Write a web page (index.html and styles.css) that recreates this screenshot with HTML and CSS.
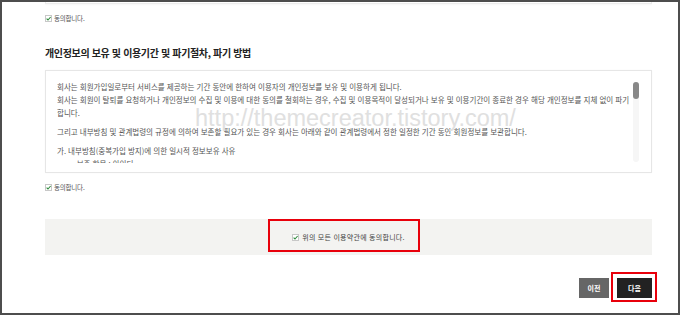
FILE: index.html
```html
<!DOCTYPE html>
<html lang="ko">
<head>
    <meta charset="UTF-8">
    <meta name="viewport" content="width=device-width, initial-scale=1.0">
    <title>약관 동의</title>
    <link rel="stylesheet" href="styles.css">
</head>
<body>
    <div class="frame">
        <div class="prev-box"></div>
        <label class="agree">
            <svg class="check" viewBox="0 0 7 7" width="7" height="7"><rect x="0.5" y="0.5" width="6" height="6" fill="#fff" stroke="#c8c8c8"/><path d="M1.6 3.6 L3 5 L5.6 2" fill="none" stroke="#2f8a3c" stroke-width="1.1"/></svg>
            <span>동의합니다.</span>
        </label>

        <h2 class="section-title">개인정보의 보유 및 이용기간 및 파기절차, 파기 방법</h2>
        <div class="terms-box">
            <div class="terms-text">
                <p>회사는 회원가입일로부터 서비스를 제공하는 기간 동안에 한하여 이용자의 개인정보를 보유 및 이용하게 됩니다.<br>
                회사는 회원이 탈퇴를 요청하거나 개인정보의 수집 및 이용에 대한 동의를 철회하는 경우, 수집 및 이용목적이 달성되거나 보유 및 이용기간이 종료한 경우 해당 개인정보를 지체 없이 파기 합니다.</p>
                <p>그리고 내부방침 및 관계법령의 규정에 의하여 보존할 필요가 있는 경우 회사는 아래와 같이 관계법령에서 정한 일정한 기간 동안 회원정보를 보관합니다.</p>
                <p>가. 내부방침(중복가입 방지)에 의한 일시적 정보보유 사유<br>
                <span class="indent">- 보존 항목 : 아이디</span></p>
            </div>
            <div class="scrollbar"><div class="thumb"></div></div>
        </div>
        <label class="agree">
            <svg class="check" viewBox="0 0 7 7" width="7" height="7"><rect x="0.5" y="0.5" width="6" height="6" fill="#fff" stroke="#c8c8c8"/><path d="M1.6 3.6 L3 5 L5.6 2" fill="none" stroke="#2f8a3c" stroke-width="1.1"/></svg>
            <span>동의합니다.</span>
        </label>

        <div class="agree-all">
            <label class="agree">
                <svg class="check" viewBox="0 0 7 7" width="7" height="7"><rect x="0.5" y="0.5" width="6" height="6" fill="#fff" stroke="#c8c8c8"/><path d="M1.6 3.6 L3 5 L5.6 2" fill="none" stroke="#2f8a3c" stroke-width="1.1"/></svg>
                <span>위의 모든 이용약관에 동의합니다.</span>
            </label>
            <div class="mark mark-all"></div>
        </div>

        <div class="buttons">
            <button class="btn btn-prev">이전</button>
            <div class="next-wrap">
                <button class="btn btn-next">다음</button>
                <div class="mark mark-next"></div>
            </div>
        </div>

        <div class="watermark">http://themecreator.tistory.com/</div>
    </div>
</body>
</html>
```

FILE: styles.css
```css
body {
    margin: 0;
    padding: 0;
    background-color: #fff;
    font-family: "Noto Sans CJK KR", "Noto Sans", sans-serif;
}
.frame {
    position: relative;
    width: 680px;
    height: 315px;
    box-sizing: border-box;
    border: 2px solid #4d4d4d;
    padding: 0 26px 0 43px;
    overflow: hidden;
}
.prev-box {
    height: 1px;
    border: 1px solid #ececec;
    border-top: none;
    box-shadow: 0 1px 2px rgba(0,0,0,0.04);
}
.agree {
    display: flex;
    align-items: center;
    gap: 2px;
    height: 10px;
    margin-top: 9px;
    font-size: 6.5px;
    color: #555;
    letter-spacing: -0.2px;
}
.check {
    display: block;
    flex: none;
}
.section-title {
    margin: 23px 0 10px;
    font-size: 10px;
    line-height: 14px;
    font-weight: bold;
    color: #222;
    letter-spacing: -0.35px;
}
.terms-box {
    display: flex;
    height: 83px;
    padding: 9px 12px 9px 11px;
    border: 1px solid #e6e6e6;
    box-shadow: 0 0 2px rgba(0,0,0,0.03);
}
.terms-text {
    flex: 1;
    overflow: hidden;
    font-size: 7.5px;
    line-height: 13px;
    color: #555;
}
.terms-text p {
    margin: 0 0 6px;
}
.indent {
    padding-left: 15px;
}
.scrollbar {
    width: 6px;
    margin: 2px 0 1px 2px;
    border-radius: 3px;
    background-color: #f6f6f6;
}
.thumb {
    height: 17px;
    border-radius: 3px;
    background-color: #888;
}
.terms-box + .agree {
    margin-top: 9px;
}
.agree-all {
    position: relative;
    display: flex;
    justify-content: center;
    align-items: center;
    height: 36px;
    margin-top: 27px;
    background-color: #f3f3f1;
}
.agree-all .agree {
    margin-top: 0;
    gap: 3px;
    font-size: 7px;
    color: #444;
    letter-spacing: 0.25px;
}
.mark {
    position: absolute;
    box-sizing: border-box;
    border: 2px solid #e8000b;
}
.mark-all {
    left: 223px;
    top: 0;
    width: 152px;
    height: 33px;
}
.buttons {
    display: flex;
    justify-content: flex-end;
    gap: 8px;
    margin-top: 23px;
}
.btn {
    height: 20px;
    border: none;
    padding: 0;
    color: #fff;
    font-family: inherit;
    font-size: 7px;
    font-weight: bold;
}
.btn-prev {
    width: 30px;
    background-color: #666;
}
.btn-next {
    width: 35px;
    background-color: #222;
}
.next-wrap {
    position: relative;
    display: flex;
}
.mark-next {
    top: -6px;
    right: -5px;
    bottom: -4px;
    left: -6px;
}
.watermark {
    position: absolute;
    left: 193px;
    top: 104px;
    font-family: "Liberation Sans", Arial, sans-serif;
    font-size: 23.5px;
    line-height: 24px;
    color: #e0e0e0;
    pointer-events: none;
}
```
